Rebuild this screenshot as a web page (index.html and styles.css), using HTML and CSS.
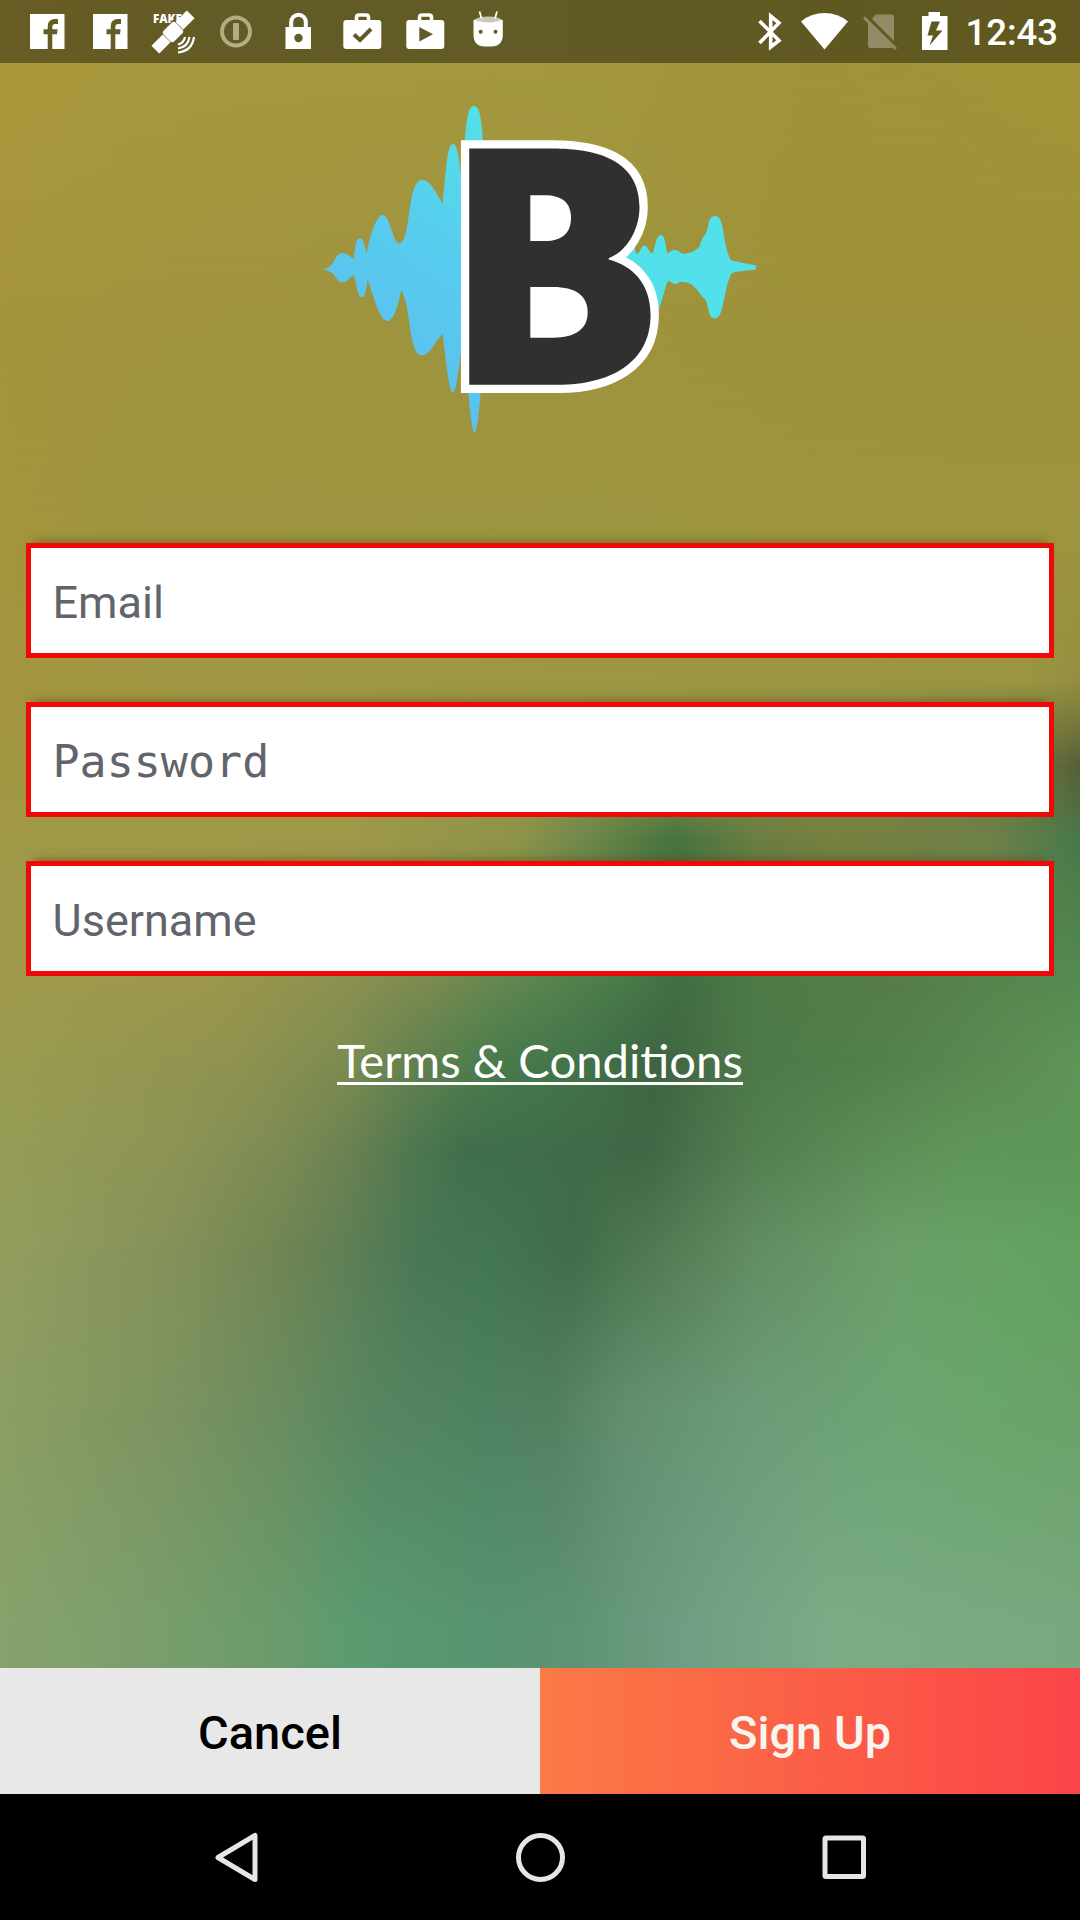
FILE: index.html
```html
<!DOCTYPE html>
<html lang="en">
<head>
<meta charset="utf-8">
<title>Sign Up</title>
<link rel="stylesheet" href="styles.css">
</head>
<body>
<div class="screen">
  <div class="backdrop" aria-hidden="true">
    <div class="band band-0"></div>
    <div class="band band-1"></div>
    <div class="band band-2"></div>
    <div class="band band-3"></div>
    <div class="band band-4"></div>
    <div class="band band-5"></div>
    <div class="band band-6"></div>
    <div class="band band-7"></div>
    <div class="band band-8"></div>
    <div class="band band-9"></div>
    <div class="band band-10"></div>
    <div class="band band-11"></div>
  </div>

  <div class="app">
    <header class="status">
      <div class="notifications">
        <svg viewBox="0 0 48 63"><path fill-rule="evenodd" d="M7 14H41.5V49H7ZM24.7 49V34.3H20.5V29.3H24.7V26.5Q24.7 19 32 19H35V24H32.3Q29.3 24 29.3 27V29.3H34.6L34 34.3H29.3V49Z"/></svg>
        <svg viewBox="0 0 48 63"><path fill-rule="evenodd" d="M7 14H41.5V49H7ZM24.7 49V34.3H20.5V29.3H24.7V26.5Q24.7 19 32 19H35V24H32.3Q29.3 24 29.3 27V29.3H34.6L34 34.3H29.3V49Z"/></svg>
        <svg viewBox="0 0 48 63">
          <text class="fake" x="4" y="22.5">FAKE</text>
          <g transform="translate(24 32) rotate(-45)">
            <rect class="sat-gap" x="-10" y="-8.500" width="20" height="17"/>
            <rect x="-25" y="-5.500" width="16" height="11"/>
            <rect x="9" y="-5.500" width="16" height="11"/>
            <rect x="-8.500" y="-7.500" width="17" height="15" rx="3"/>
          </g>
          <g class="line thin">
            <path d="M29 44.500Q35 43 36 37"/><path d="M29 48.500Q39 47 40.500 37"/><path d="M29 52.500Q43 51 45 37"/>
          </g>
        </svg>
        <svg viewBox="0 0 48 63" class="muted"><circle cx="24" cy="31.500" r="14" fill="none" stroke="#b3ac85" stroke-width="4"/><rect x="21" y="23" width="6" height="17" rx="1" fill="#b3ac85"/></svg>
        <svg viewBox="0 0 48 63"><path fill-rule="evenodd" d="M10.500 27H36V49H10.500ZM27.700 38A4.200 4.200 0 1 0 19.300 38A4.200 4.200 0 1 0 27.700 38Z"/><path class="line" stroke-width="4" d="M16.200 28V22A7.300 7.300 0 0 1 30.800 22V28"/></svg>
        <svg viewBox="0 0 48 63"><rect x="5.300" y="20" width="38" height="29" rx="3"/><path class="line" stroke-width="3.600" d="M18.500 21V17.500Q18.500 15 21 15H28Q30.500 15 30.500 17.500V21"/><path class="cut" d="M16 34.500L22 40L33 29"/></svg>
        <svg viewBox="0 0 48 63"><rect x="5.300" y="20" width="38" height="29" rx="3"/><path class="line" stroke-width="3.600" d="M18.500 21V17.500Q18.500 15 21 15H28Q30.500 15 30.500 17.500V21"/><path class="hole" d="M18.300 27L32 34.300L18.300 41.500Z"/></svg>
        <svg viewBox="0 0 48 63"><path d="M9.500 20Q24 15 38.800 20V33Q39.500 46.500 27 46.500H21Q8.800 46.500 9.500 33Z"/><ellipse cx="24.200" cy="19.500" rx="12.500" ry="3" fill="#cbc8b5"/><path class="line" stroke-width="1.800" d="M17.500 18.500L15.500 11.500M31 18.500L33 11.500"/><circle class="hole" cx="16.700" cy="31.700" r="2"/><circle class="hole" cx="31.500" cy="31.700" r="2"/></svg>
      </div>
      <div class="system">
        <svg class="bt" viewBox="0 0 24 63"><path class="line" stroke-width="3.600" d="M1.500 21L21 40.500L12.700 47V16L21 23L1.500 43"/></svg>
        <svg class="wifi" viewBox="0 0 48 63"><path d="M0 21.500Q10 13 23.500 13T47 21.500L23.500 49.500Z"/></svg>
        <svg class="sim" viewBox="0 0 36 63"><path d="M12.500 14.500H29Q31 14.500 31 16.500V41L9 19ZM5 22.500L30 47.500Q29.500 48 28 48H7.500Q5 48 5 45.500Z"/><path class="slash" d="M1 17.500L33 49"/></svg>
        <svg class="battery" viewBox="0 0 26 63"><path fill-rule="evenodd" d="M6.500 12H18V16H25.500V50H0V16H6.500ZM9.500 21.500L5.500 35.500H11L7.500 45.500L20.500 30.500H14L18 21.500Z"/></svg>
        <span class="clock">12:43</span>
      </div>
    </header>

    <main class="content">
      <svg class="logo" viewBox="0 0 1380 1080" role="img">
        <defs>
          <linearGradient id="wave" gradientUnits="userSpaceOnUse" x1="200" y1="760" x2="620" y2="160">
            <stop offset="0" stop-color="#5bc2ef"/><stop offset=".5" stop-color="#57cdee"/><stop offset="1" stop-color="#52e0e9"/>
          </linearGradient>
        </defs>
        <path fill="url(#wave)" d="M40 538C58 532 64 530 72 512C86 484 104 480 130 508C136 472 138 445 150 445C162 445 164 470 170 492C180 430 202 374 218 374C240 374 248 460 268 460C304 460 290 270 336 270C362 270 376 306 398 340C408 240 412 162 428 162C442 162 447 200 452 250H465V150C470 90 474 48 492 48C510 48 514 90 519 150L560 500L512 908C506 970 502 1026 494 1026C486 1026 480 960 475 908L460 760L452 790C443 860 438 907 428 907C418 907 408 820 398 732C378 748 362 796 336 796C294 796 304 640 273 602C264 650 250 693 232 693C208 693 188 610 173 568C168 600 166 622 156 622C142 622 140 580 131 556C122 556 116 577 97 577C82 577 76 556 66 549C56 542 48 542 40 538Z"/>
        <path fill="#52e1ea" d="M920 510L968 440C973 465 976 492 981 492C989 492 992 467 1003 467C1014 467 1018 490 1027 490C1036 480 1036 435 1052 435C1070 435 1066 490 1075 490C1080 486 1084 480 1095 480C1106 480 1110 491 1122 491C1142 491 1158 482 1170 468C1174 446 1180 440 1187 432C1198 406 1194 378 1215 378C1246 378 1236 460 1262 510C1276 516 1300 518 1338 526V538C1310 544 1276 542 1263 552C1238 610 1242 685 1215 685C1192 685 1198 650 1187 630C1166 612 1156 575 1114 575C1104 576 1102 582 1094 582C1086 582 1082 573 1074 573C1064 590 1060 626 1045 660L980 700Z"/>
        <text class="letter" x="396" y="884">B</text>
        <g fill="#303030"><rect x="620" y="290" width="240" height="190"/><rect x="620" y="560" width="260" height="210"/></g>
        <g fill="#fff"><path d="M661 316H705C755 316 783 338 783 384S755 453 705 453H661Z"/><path d="M661 591H730C795 591 833 616 833 667S795 743 730 743H661Z"/></g>
      </svg>

      <form class="fields">
        <div class="field" role="textbox">Email</div>
        <div class="field mono" role="textbox">Password</div>
        <div class="field" role="textbox">Username</div>
      </form>

      <a class="terms">Terms &amp; Conditions</a>
    </main>

    <div class="actions">
      <div class="button cancel" role="button">Cancel</div>
      <div class="button signup" role="button">Sign Up</div>
    </div>

    <nav class="navbar">
      <svg viewBox="0 0 60 60"><path d="M50 8.500V52.500L13 30.500Z"/></svg>
      <svg viewBox="0 0 60 60"><circle cx="30.500" cy="30.500" r="22"/></svg>
      <svg viewBox="0 0 60 60"><rect x="10" y="11" width="38.500" height="38.500" rx="1"/></svg>
    </nav>
  </div>
</div>
</body>
</html>
```
FILE: styles.css
```css
* { box-sizing: border-box; }

body {
  margin: 0;
  font-family: Roboto, "Liberation Sans", sans-serif;
}

.screen {
  display: grid;
  width: 1080px;
  height: 1920px;
  overflow: hidden;
  background: #000;
}

.backdrop,
.app { grid-area: 1 / 1; }

/* Blurred photo: horizontal colour rows that fade into one another going down */
.backdrop {
  z-index: 0;
  display: grid;
  height: 1668px;
  overflow: hidden;
}

.band {
  grid-area: 1 / 1;
  margin-top: var(--from, 0px);
  -webkit-mask-image: linear-gradient(transparent, #000 var(--fade, 0px));
  mask-image: linear-gradient(transparent, #000 var(--fade, 0px));
}

.band-0 { background: linear-gradient(90deg, #ab993c 0, #a6983e 20%, #a4983f 50%, #a09339 75%, #a29435); }
.band-1 { --from: 63px; --fade: 237px; background: linear-gradient(90deg, #a4943c, #9f943e 30%, #9f943e 55%, #9e923a 75%, #9e923a); }
.band-2 { --from: 300px; --fade: 240px; background: linear-gradient(90deg, #a4953c, #9c9441 15%, #9c9541 55%, #9d943e); }
.band-3 { --from: 540px; --fade: 140px; background: linear-gradient(90deg, #a3953f, #9f9744 20%, #9c9645 60%, #9a9543 95%, #948f40); }
.band-4 { --from: 680px; --fade: 85px; background: linear-gradient(90deg, #a29742, #9f9846 30%, #959447 45%, #8a8d45 65%, #7e8544 85%, #666c3a 97%, #575f37); }
.band-5 { --from: 765px; --fade: 75px; background: linear-gradient(90deg, #a09948, #9f9848 33%, #8e934a 48%, #6f884a 54%, #47733f 62.5%, #6a7d42 70%, #76803f 77%, #6e8048 92%, #47794a); }
.band-6 { --from: 840px; --fade: 140px; background: linear-gradient(90deg, #a09a4c, #9c974c 19%, #8d9150 31%, #7d8b50 39%, #5c8550 49%, #4a7c4a 57%, #426e43 63%, #4f7a48 70%, #567c48 83%, #57854d 92%, #558a50); }
.band-7 { --from: 980px; --fade: 80px; background: linear-gradient(90deg, #9a9c50, #909250 22%, #7c8c50 32%, #648250 38%, #487c4c 46%, #42734a 54%, #3d6542 61%, #456b43 64%, #4d7a4a 70%, #527f4a 80%, #5a8750 89%, #5f9458); }
.band-8 { --from: 1060px; --fade: 90px; background: linear-gradient(90deg, #969c56, #8d9455 16%, #7c8b54 26%, #6c8252 32%, #4e7750 38.5%, #416f4c 43%, #3f6d49 51%, #426645 60%, #4a714b 64%, #547f50 70%, #5c8c57 80%, #5f9658 89%, #5d9857); }
.band-9 { --from: 1150px; --fade: 100px; background: linear-gradient(90deg, #939e5e, #84915a 16%, #708553 26%, #607f56 32%, #487754 39%, #437652 45%, #416c4a 53%, #4a744e 57%, #5a8058 64%, #638d63 70%, #6b9f6a 83%, #66a263 92%, #62a060); }
.band-10 { --from: 1250px; --fade: 160px; background: linear-gradient(90deg, #8c9e63, #7c9360 16%, #6a8c60 26%, #568560 35%, #4e8260 45%, #52805f 51%, #628f6e 58%, #6c9c78 70%, #6da573 83%, #6aa56a 92%, #6aa268); }
.band-11 { --from: 1410px; --fade: 220px; background: linear-gradient(90deg, #87a26c, #7b9e6c 13%, #6a9b6c 26%, #5a9b70 33%, #579470 45%, #5f9275 53%, #6f9f84 64%, #7aac86 77%, #78a87f); }

.app {
  z-index: 1;
  display: flex;
  flex-direction: column;
}

.status {
  display: flex;
  justify-content: space-between;
  height: 63px;
  padding: 0 22px 0 23px;
  background: rgba(0, 0, 0, .4);
}

.status svg {
  display: block;
  height: 63px;
  fill: #fff;
}

.notifications {
  display: flex;
  gap: 15px;
}

.notifications svg { width: 48px; }

.status .line {
  fill: none;
  stroke: #fff;
}

.status .thin { stroke-width: 2.2; }

.status .cut {
  fill: none;
  stroke: #635a26;
  stroke-width: 4;
}

.status .hole,
.status .sat-gap { fill: #635a26; }

.fake { font: 800 11.500px "Open Sans", sans-serif; }

.system { display: flex; }
.bt { width: 24px; }
.wifi { width: 48px; margin-left: 19px; }
.status .sim { width: 36px; margin-left: 14px; fill: #918b66; }
.slash { stroke: #918b66; stroke-width: 3; }
.battery { width: 26px; margin-left: 23px; }

.clock {
  margin-left: 17px;
  color: #fff;
  font-size: 36.500px;
  font-weight: 500;
  line-height: 66px;
}

.content {
  display: flex;
  flex: 1;
  flex-direction: column;
  align-items: center;
}

.logo {
  display: block;
  width: 460px;
  height: 360px;
  margin-top: 27px;
  overflow: visible;
}

.letter {
  font: 900 951px "Noto Sans CJK SC", sans-serif;
  fill: #303030;
  stroke: #fff;
  stroke-width: 50px;
  stroke-linejoin: miter;
  paint-order: stroke;
}

.fields {
  display: flex;
  flex-direction: column;
  gap: 44px;
  width: 1028px;
  margin: 93px 0 0;
}

.field {
  height: 115px;
  padding-left: 21.500px;
  border: 5px solid #f20808;
  background: #fff;
  box-shadow: 0 -10px 8px -8px rgba(90, 70, 20, .5);
  color: #61646b;
  font-size: 45px;
  line-height: 109px;
}

.mono {
  font-family: "DejaVu Sans Mono", monospace;
  font-size: 45px;
}

.terms {
  height: 53px;
  margin-top: 56px;
  border-bottom: 3px solid #fff;
  color: #fff;
  font-family: Lato, sans-serif;
  font-size: 47.200px;
  line-height: 56px;
}

.actions {
  display: grid;
  grid-template-columns: 1fr 1fr;
  height: 126px;
}

.button {
  font-size: 47px;
  font-weight: 500;
  line-height: 130px;
  text-align: center;
}

.cancel {
  background: #e8e8e8;
  color: #000;
}

.signup {
  background: linear-gradient(90deg, #fb7a46, #fb4448);
  color: #f8f4f0;
}

.navbar {
  display: flex;
  justify-content: space-between;
  height: 126px;
  padding: 33px 205px;
  background: #000;
}

.navbar svg {
  width: 60px;
  height: 60px;
  fill: none;
  stroke: #e6e6e6;
  stroke-width: 5;
  stroke-linejoin: round;
}
```
